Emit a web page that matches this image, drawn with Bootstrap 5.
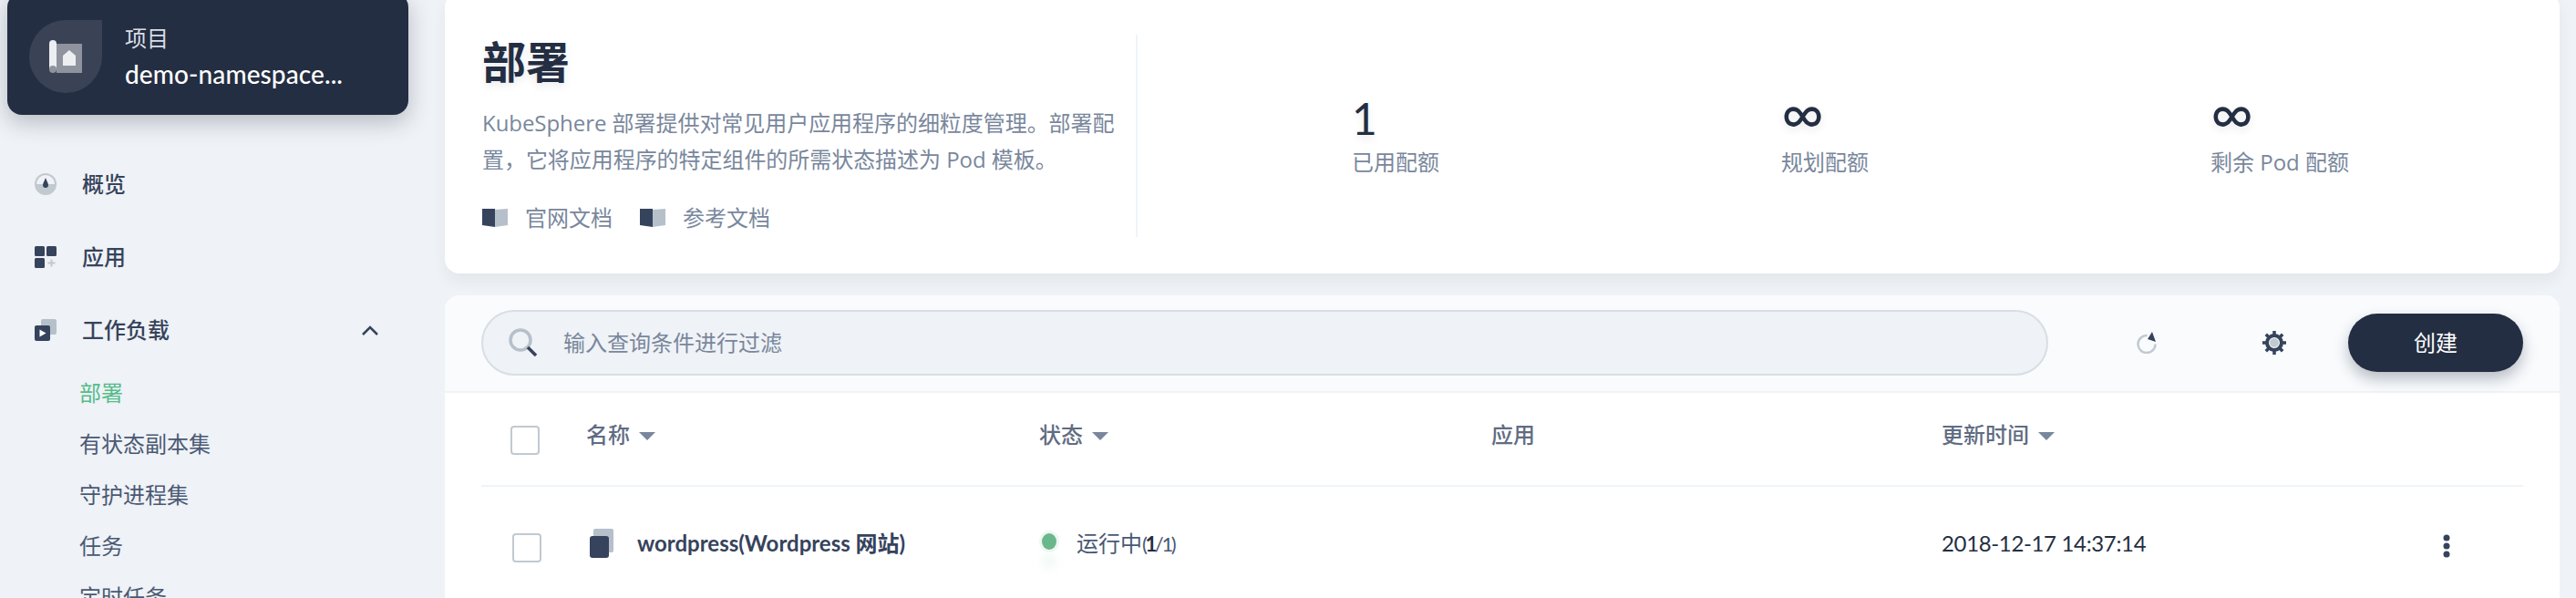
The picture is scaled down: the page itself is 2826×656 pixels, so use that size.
<!DOCTYPE html>
<html lang="zh-CN">
<head>
    <meta charset="UTF-8">
    <meta name="viewport" content="width=device-width, initial-scale=1.0">
    <title>部署</title>
    <link href="https://cdn.jsdelivr.net/npm/bootstrap@5.3.0/dist/css/bootstrap.min.css" rel="stylesheet">
    <script src="https://cdn.jsdelivr.net/npm/bootstrap@5.3.0/dist/js/bootstrap.bundle.min.js"></script>
    <style>
        html, body { height: 656px; overflow: hidden; }
        body {
            background-color: #eff2f6;
            font-family: Lato, "Noto Sans CJK SC", sans-serif;
            font-size: 24px;
            color: #242e42;
        }
        .page-shell { height: 656px; overflow: hidden; }

        /* sidebar */
        .side-col { width: 488px; flex: none; padding-left: 8px; }
        .project-box {
            width: 440px;
            height: 134px;
            margin-top: -8px;
            padding: 30px 24px 0;
            background-color: #242e42;
            border-radius: 16px;
            box-shadow: 0 8px 24px rgba(36, 46, 66, .28);
            color: #fff;
        }
        .project-mark {
            width: 80px;
            height: 80px;
            flex: none;
            margin-right: 25px;
            background-color: rgba(255, 255, 255, .1);
            border-radius: 50% 0 50% 50%;
        }
        .project-label { font-size: 24px; line-height: 40px; color: #d8dee5; }
        .project-name { font-size: 28px; line-height: 38px; font-weight: 500; letter-spacing: .1px; }
        .side-nav { margin: 36px 0 0 30px; }
        .side-item { height: 80px; color: #36435c; font-weight: 500; width: 378px; }
        .side-item svg { flex: none; margin-right: 28px; }
        .side-sub { padding-left: 49px; margin-top: 1px; }
        .side-sub div { height: 56px; line-height: 56px; color: #4a5974; white-space: nowrap; }
        .side-sub .is-current { color: #55bc8a; }

        /* main column */
        .main-col { width: 2320px; flex: none; }
        .intro-box {
            height: 308px;
            margin-top: -8px;
            padding: 46px 0 40px;
            background-color: #fff;
            border-radius: 16px;
            box-shadow: 0 8px 16px rgba(36, 46, 66, .06);
        }
        .intro-text { width: 760px; flex: none; padding: 0 20px 0 41px; border-right: 2px solid #eff4f9; }
        .intro-text h1 { font-size: 48px; font-weight: 700; line-height: 60px; margin: 0 0 17px; text-shadow: 0 4px 8px rgba(36, 46, 66, .1); }
        .intro-text p { font-family: "Open Sans", "Noto Sans CJK SC", sans-serif; color: #79879c; line-height: 40px; margin: 0 0 26px; letter-spacing: -.05px; }
        .doc-link { color: #79879c; margin-right: 30px; }
        .doc-link svg { margin-right: 19px; }
        .stat-row { padding-left: 235px; padding-top: 63px; }
        .stat-cell { width: 471px; }
        .stat-num { font-size: 48px; line-height: 58px; text-shadow: 0 4px 8px rgba(36, 46, 66, .1); }
        .stat-inf { font-size: 64px; line-height: 44px; padding-bottom: 14px; }
        .stat-cap { font-family: "Open Sans", "Noto Sans CJK SC", sans-serif; color: #79879c; line-height: 38px; }

        /* list */
        .list-box {
            margin-top: 24px;
            height: 400px;
            background-color: #fff;
            border-radius: 16px 16px 0 0;
        }
        .tool-strip {
            height: 107px;
            padding: 0 40px 2px;
            background-color: #f9fbfd;
            border-bottom: 2px solid #eff4f9;
            border-radius: 16px 16px 0 0;
        }
        .filter-box {
            width: 1719px;
            height: 72px;
            padding-left: 28px;
            background-color: #eff2f6;
            border: 2px solid #d8dee5;
            border-radius: 36px;
            color: #79879c;
        }
        .filter-box svg { margin-right: 28px; }
        .tool-icon-a { margin-left: 97px; }
        .tool-icon-b { margin-left: 116px; }
        .create-btn {
            width: 192px;
            height: 64px;
            margin-left: auto;
            padding: 0;
            font-size: 24px;
            color: #fff;
            background-color: #242e42;
            border: 0;
            border-radius: 32px;
            box-shadow: 0 8px 16px rgba(36, 46, 66, .3);
        }
        .create-btn:hover { color: #fff; background-color: #242e42; }
        .list-wrap { padding: 0 40px; }
        .table.deploy-table { table-layout: fixed; margin: 0; --bs-table-bg: transparent; }
        .deploy-table th, .deploy-table td { padding: 0; border: 0; vertical-align: middle; font-size: 24px; }
        .deploy-table th { height: 102px; color: #5f6c82; font-weight: 500; border-bottom: 2px solid #eff4f9; padding-bottom: 10px; }
        .deploy-table td { height: 130px; color: #242e42; padding-bottom: 5px; }
        .sort-mark {
            display: inline-block;
            margin-left: 10px;
            vertical-align: 3px;
            border-left: 9px solid transparent;
            border-right: 9px solid transparent;
            border-top: 9px solid #79879c;
        }
        .form-check-input.box-check {
            display: block;
            width: 32px;
            height: 32px;
            margin: 0;
            background-color: #fff;
            border: 2px solid #c1c9d1;
            border-radius: 4px;
        }
        .head-check { margin: 12px 0 0 32px !important; }
        .row-check { margin: 10px 0 0 34px !important; }
        .row-name { font-weight: 700; color: #36435c; }
        .row-name svg { margin-right: 24px; }
        .state-dot {
            width: 16px;
            height: 18px;
            flex: none;
            margin: -4px 22px 0 3px;
            background-color: #6bb78c;
            border-radius: 50%;
            box-shadow: 0 0 0 3px #eef8f2, 0 22px 12px -2px rgba(85, 188, 138, .14);
        }
        .state-text { color: #4a5974; }
        .state-count { font-size: 22px; letter-spacing: -2.400px; }
        .state-count b { color: #242e42; }
        .time-text { letter-spacing: -.35px; }
        .kebab-cell { padding-right: 80px !important; }
    </style>
</head>
<body>
    <div class="page-shell d-flex">
        <aside class="side-col">
            <div class="project-box d-flex">
                <div class="project-mark d-flex align-items-center justify-content-center">
                    <svg width="36" height="36" viewBox="0 0 36 36">
                        <rect x="8" y="4" width="28" height="32" fill="#8e939d"/>
                        <path d="M0 4a4 4 0 0 1 8 0v28H0z" fill="#eceef1" />
                        <circle cx="4" cy="32" r="4" fill="#8e939d"/>
                        <path d="M15 28V17l7-6 7 6v11z" fill="#eceef1"/>
                    </svg>
                </div>
                <div>
                    <div class="project-label">项目</div>
                    <div class="project-name">demo-namespace...</div>
                </div>
            </div>
            <nav class="side-nav">
                <div class="side-item d-flex align-items-center">
                    <svg width="24" height="24" viewBox="0 0 24 24">
                        <circle cx="12" cy="12" r="12" fill="#c1c9d1"/>
                        <path d="M2 12a10 10 0 0 1 20 0z" fill="#eff2f6"/>
                        <path d="M12 5c1.5 4 3 6 3 8a3 3 0 0 1-6 0c0-2 1.500-4 3-8z" fill="#36435c"/>
                    </svg>
                    概览
                </div>
                <div class="side-item d-flex align-items-center">
                    <svg width="24" height="24" viewBox="0 0 24 24">
                        <rect width="11" height="11" rx="1.500" fill="#36435c"/>
                        <rect x="13" width="11" height="11" rx="1.500" fill="#36435c"/>
                        <rect y="13" width="11" height="11" rx="1.500" fill="#36435c"/>
                        <path d="M17.500 14.500h2v3h3v2h-3v3h-2v-3h-3v-2h3z" fill="#c1c9d1"/>
                    </svg>
                    应用
                </div>
                <div class="side-item d-flex align-items-center">
                    <svg width="24" height="24" viewBox="0 0 24 24">
                        <rect x="7" width="17" height="17" rx="2" fill="#b6c0cb"/>
                        <rect y="7" width="17" height="17" rx="2" fill="#36435c"/>
                        <path d="M5.500 11.500l7 4-7 4z" fill="#fff"/>
                    </svg>
                    工作负载
                    <svg class="ms-auto" width="20" height="14" viewBox="0 0 20 14" style="margin-right:0">
                        <path d="M2 12l8-8 8 8" fill="none" stroke="#36435c" stroke-width="2.500"/>
                    </svg>
                </div>
                <div class="side-sub">
                    <div class="is-current">部署</div>
                    <div>有状态副本集</div>
                    <div>守护进程集</div>
                    <div>任务</div>
                    <div>定时任务</div>
                </div>
            </nav>
        </aside>

        <main class="main-col">
            <section class="intro-box d-flex">
                <div class="intro-text">
                    <h1>部署</h1>
                    <p>KubeSphere 部署提供对常见用户应用程序的细粒度管理。部署配置，它将应用程序的特定组件的所需状态描述为 Pod 模板。</p>
                    <div class="d-flex">
                        <a class="doc-link d-flex align-items-center text-decoration-none" href="#">
                            <svg width="28" height="20" viewBox="0 0 28 20"><path d="M0 0h14v20L0 18z" fill="#36435c"/><path d="M14 1l14-1v18l-14 2z" fill="#b6c0cb"/></svg>
                            官网文档
                        </a>
                        <a class="doc-link d-flex align-items-center text-decoration-none" href="#">
                            <svg width="28" height="20" viewBox="0 0 28 20"><path d="M0 0h14v20L0 18z" fill="#36435c"/><path d="M14 1l14-1v18l-14 2z" fill="#b6c0cb"/></svg>
                            参考文档
                        </a>
                    </div>
                </div>
                <div class="stat-row d-flex">
                    <div class="stat-cell"><div class="stat-num">1</div><div class="stat-cap">已用配额</div></div>
                    <div class="stat-cell"><div class="stat-num stat-inf">∞</div><div class="stat-cap">规划配额</div></div>
                    <div class="stat-cell"><div class="stat-num stat-inf">∞</div><div class="stat-cap">剩余 Pod 配额</div></div>
                </div>
            </section>

            <section class="list-box">
                <div class="tool-strip d-flex align-items-center">
                    <div class="filter-box d-flex align-items-center">
                        <svg width="32" height="32" viewBox="0 0 32 32">
                            <circle cx="13" cy="13" r="11" fill="none" stroke="#b6c0cb" stroke-width="3.500"/>
                            <path d="M21 21l9 9" stroke="#36435c" stroke-width="3.500"/>
                        </svg>
                        输入查询条件进行过滤
                    </div>
                    <svg class="tool-icon-a" width="22" height="24" viewBox="0 0 22 24">
                        <path d="M20.500 13.500a9.500 9.500 0 1 1-9-9.500" fill="none" stroke="#c1c9d1" stroke-width="2.500"/>
                        <path d="M17 0l4 11-9-3z" fill="#36435c"/>
                    </svg>
                    <svg class="tool-icon-b" width="26" height="26" viewBox="0 0 26 26">
                        <circle cx="13" cy="13" r="8" fill="#fff" stroke="#36435c" stroke-width="4"/>
                        <circle cx="13" cy="13" r="5" fill="#c1c9d1"/>
                        <g stroke="#36435c" stroke-width="3.500">
                            <path d="M13 0v4M13 22v4M0 13h4M22 13h4M3.800 3.800l2.800 2.800M19.400 19.400l2.800 2.800M3.800 22.200l2.800-2.800M19.400 6.600l2.800-2.800"/>
                        </g>
                    </svg>
                    <button type="button" class="btn create-btn">创建</button>
                </div>
                <div class="list-wrap">
                    <table class="table deploy-table">
                        <colgroup>
                            <col style="width:115px">
                            <col style="width:497px">
                            <col style="width:496px">
                            <col style="width:494px">
                            <col>
                            <col style="width:100px">
                        </colgroup>
                        <thead>
                            <tr>
                                <th><input class="form-check-input box-check head-check" type="checkbox" aria-label="全选"></th>
                                <th>名称<span class="sort-mark"></span></th>
                                <th>状态<span class="sort-mark"></span></th>
                                <th>应用</th>
                                <th>更新时间<span class="sort-mark"></span></th>
                                <th></th>
                            </tr>
                        </thead>
                        <tbody>
                            <tr>
                                <td><input class="form-check-input box-check row-check" type="checkbox" aria-label="选择"></td>
                                <td>
                                    <div class="row-name d-flex align-items-center">
                                        <svg width="32" height="32" viewBox="0 0 32 32">
                                            <rect x="8" y="0" width="22" height="26" rx="2" fill="#b6c0cb"/>
                                            <rect x="4" y="8" width="21" height="24" rx="3" fill="#36435c"/>
                                        </svg>
                                        wordpress(Wordpress 网站)
                                    </div>
                                </td>
                                <td>
                                    <div class="d-flex align-items-center">
                                        <span class="state-dot"></span>
                                        <span class="state-text">运行中<span class="state-count">(<b>1</b>/1)</span></span>
                                    </div>
                                </td>
                                <td></td>
                                <td class="time-text">2018-12-17 14:37:14</td>
                                <td class="kebab-cell text-end">
                                    <svg width="8" height="26" viewBox="0 0 8 26">
                                        <circle cx="4" cy="4" r="3.500" fill="#36435c"/>
                                        <circle cx="4" cy="13" r="3.500" fill="#36435c"/>
                                        <circle cx="4" cy="22" r="3.500" fill="#36435c"/>
                                    </svg>
                                </td>
                            </tr>
                        </tbody>
                    </table>
                </div>
            </section>
        </main>
    </div>
</body>
</html>
